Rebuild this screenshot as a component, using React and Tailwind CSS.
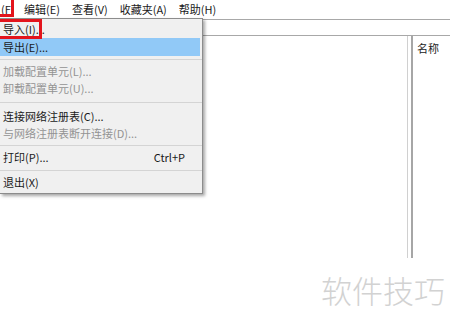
import React from 'react';

const MenuRow = ({ label, shortcut, disabled, active }) => (
  <div
    className={`h-[17px] flex items-center justify-between pl-[3px] pr-[17px] ${active ? 'bg-[#91c9f7]' : ''} ${disabled ? 'text-[#939393]' : 'text-[#1a1a1a]'}`}
  >
    <span>{label}</span>
    {shortcut && <span>{shortcut}</span>}
  </div>
);

const Sep = ({ h }) => (
  <div className={`${h} flex items-center`}>
    <div className="w-full h-px bg-[#d4d4d4]" />
  </div>
);

const App = () => {
  const font = { fontFamily: '"Noto Sans CJK SC", "Noto Sans", sans-serif' };

  return (
    <div className="relative w-[450px] h-[327px] bg-white overflow-hidden text-[11px] leading-none" style={font}>
      {/* menu bar */}
      <div className="h-[19px] flex items-center text-[#1a1a1a]">
        <div className="w-[18px] pl-[1px]">(F</div>
        <div className="px-[6px]">编辑(E)</div>
        <div className="px-[6px]">查看(V)</div>
        <div className="px-[6px]">收藏夹(A)</div>
        <div className="px-[6px]">帮助(H)</div>
      </div>

      {/* address bar */}
      <div className="h-[17px] border-t border-b border-[#a8a8a8]" />

      {/* panes */}
      <div className="flex h-[222px]">
        <div className="w-[408px] border-r border-[#d0d0d0]" />
        <div className="w-[3px]" />
        <div className="w-[2px] bg-[#a6a6a6]" />
        <div className="flex-1 pl-[4px] pt-[7px] text-[#222]">名称</div>
      </div>

      {/* dropdown menu */}
      <div className="absolute left-0 top-[18px] w-[203px] bg-[#f0f0f0] border border-l-0 border-[#8c8c8c] pt-[2px] pb-[2px] shadow-[2px_2px_3px_rgba(0,0,0,0.35)]">
        <MenuRow label="导入(I)..." />
        <div className="h-[18px] flex items-center pl-[3px] bg-[#91c9f7] text-[#1a1a1a] mr-[2px]">导出(E)...</div>
        <Sep h="h-[7px]" />
        <MenuRow label="加载配置单元(L)..." disabled />
        <MenuRow label="卸载配置单元(U)..." disabled />
        <Sep h="h-[11px]" />
        <MenuRow label="连接网络注册表(C)..." />
        <MenuRow label="与网络注册表断开连接(D)..." disabled />
        <Sep h="h-[7px]" />
        <MenuRow label="打印(P)..." shortcut="Ctrl+P" />
        <Sep h="h-[8px]" />
        <MenuRow label="退出(X)" />
      </div>

      {/* annotation boxes */}
      <div className="absolute left-[-3px] top-[-3px] w-[17px] h-[20px] border-[3px] border-[#e3141c]" />
      <div className="absolute left-[-3px] top-[19px] w-[45px] h-[20px] border-[3px] border-[#e3141c]" />

      {/* watermark */}
      <div className="absolute left-[321px] top-[274px] text-[31px] leading-none font-light text-[#d2d2d2]" style={font}>
        软件技巧
      </div>
    </div>
  );
};

export default App;
